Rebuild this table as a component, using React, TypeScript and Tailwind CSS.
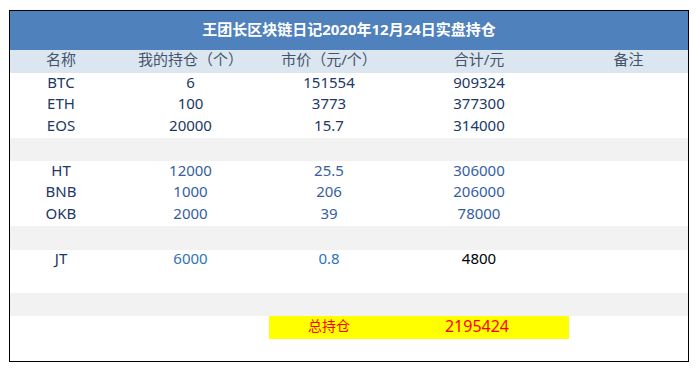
type Row = {
  name: string;
  amount: string;
  price: string;
  total: string;
  h: string;
  numColor: string;
  totalColor?: string;
};

const topGroup: Row[] = [
  { name: "BTC", amount: "6", price: "151554", total: "909324", h: "h-[22px]", numColor: "text-[#203864]" },
  { name: "ETH", amount: "100", price: "3773", total: "377300", h: "h-[21px]", numColor: "text-[#203864]" },
  { name: "EOS", amount: "20000", price: "15.7", total: "314000", h: "h-[22px]", numColor: "text-[#203864]" },
];

const midGroup: Row[] = [
  { name: "HT", amount: "12000", price: "25.5", total: "306000", h: "h-[22px]", numColor: "text-[#3560a0]" },
  { name: "BNB", amount: "1000", price: "206", total: "206000", h: "h-[21px]", numColor: "text-[#3560a0]" },
  { name: "OKB", amount: "2000", price: "39", total: "78000", h: "h-[22px]", numColor: "text-[#3560a0]" },
];

const cols = "grid grid-cols-[102px_157px_120px_180px_119px]";

const DataRow = ({ row }: { row: Row }) => (
  <div className={`${cols} ${row.h} items-center text-center text-[15px] leading-none`}>
    <div className="text-[#203864] -mt-[4px]">{row.name}</div>
    <div className={`${row.numColor} -mt-[4px]`}>{row.amount}</div>
    <div className={`${row.numColor} -mt-[4px]`}>{row.price}</div>
    <div className={`${row.totalColor ?? row.numColor} -mt-[4px]`}>{row.total}</div>
    <div />
  </div>
);

const Spacer = ({ h }: { h: string }) => <div className={`${h} bg-[#f2f2f2]`} />;

export default function App() {
  return (
    <div
      className="bg-white w-[699px] h-[370px] pt-[10px] pl-[9px]"
      style={{ fontFamily: '"Noto Sans", "Noto Sans CJK SC", sans-serif' }}
    >
      <div className="w-[680px] h-[352px] border border-black flex flex-col">
        <div className="h-[39px] bg-[#4f81bd] flex items-center justify-center text-white font-bold text-[15px] pb-[3px]">
          王团长区块链日记2020年12月24日实盘持仓
        </div>

        <div className={`${cols} h-[23px] bg-[#dce6f1] items-center text-center text-[15px] text-[#44546a] leading-none`}>
          <div className="-mt-[4px]">名称</div>
          <div className="-mt-[4px]">我的持仓（个）</div>
          <div className="-mt-[4px]">市价（元/个）</div>
          <div className="-mt-[4px]">合计/元</div>
          <div className="-mt-[4px]">备注</div>
        </div>

        {topGroup.map((row) => (
          <DataRow key={row.name} row={row} />
        ))}
        <Spacer h="h-[23px]" />
        {midGroup.map((row) => (
          <DataRow key={row.name} row={row} />
        ))}
        <Spacer h="h-[24px]" />
        <DataRow
          row={{
            name: "JT",
            amount: "6000",
            price: "0.8",
            total: "4800",
            h: "h-[21px]",
            numColor: "text-[#2e75b6]",
            totalColor: "text-black",
          }}
        />
        <div className="h-[22px]" />
        <Spacer h="h-[23px]" />

        <div className={`${cols} h-[23px] items-center text-center leading-none`}>
          <div />
          <div />
          <div className="col-span-2 h-full bg-[#ffff00] grid grid-cols-[120px_180px] items-center text-[#ff0000]">
            <div className="-mt-[3px] text-[14px]">总持仓</div>
            <div className="-mt-[3px] pr-[4px] text-[16px]">2195424</div>
          </div>
          <div />
        </div>
        <div className="flex-1" />
      </div>
    </div>
  );
}
